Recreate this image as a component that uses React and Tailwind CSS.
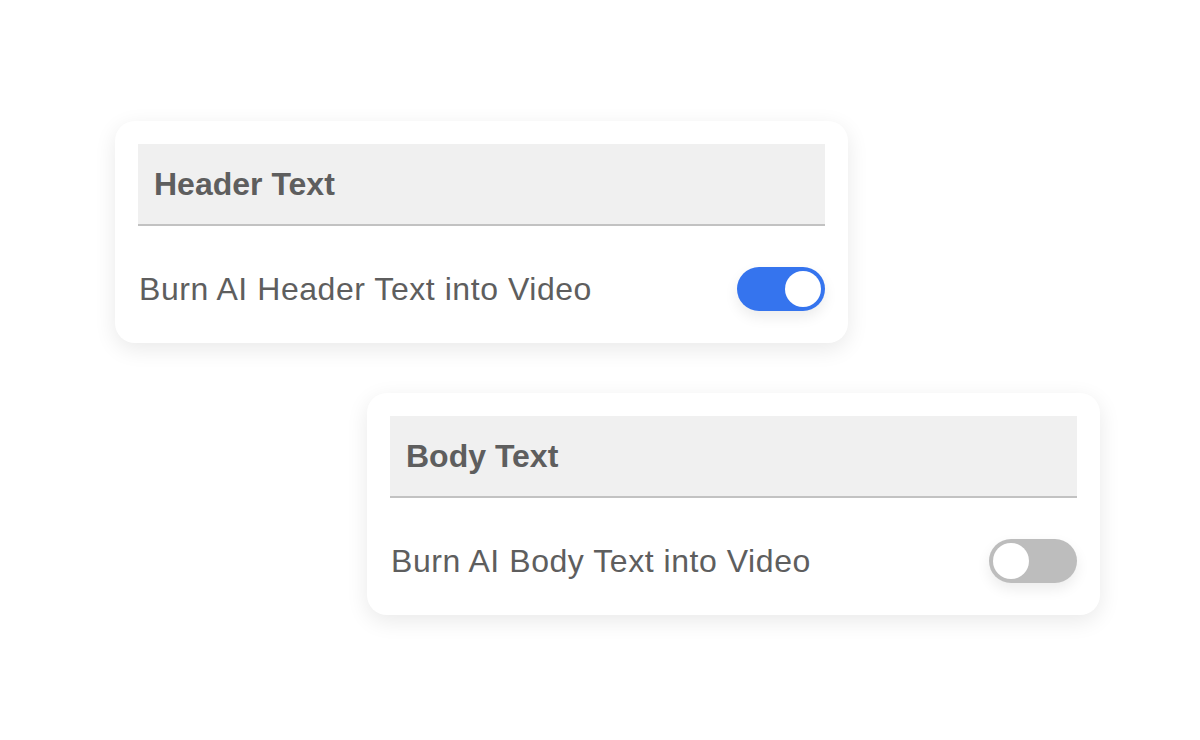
export default function App() {
  const Card = ({ title, label, on, className }) => (
    <div
      className={`w-[733px] h-[222px] rounded-[20px] bg-white shadow-[0_6px_22px_rgba(0,0,0,0.09)] px-[23px] pt-[23px] ${className}`}
    >
      <div className="h-[82px] bg-[#f0f0f0] border-b-2 border-[#c2c2c2] flex items-center pl-[16px]">
        <span className="text-[32px] font-bold text-[#5e5e5e] leading-none">{title}</span>
      </div>
      <div className="flex items-center justify-between pt-[41px] pl-[1px]">
        <span className="text-[32px] tracking-[0.55px] text-[#5e5e5e] leading-none">{label}</span>
        {on ? (
          <div className="w-[88px] h-[44px] rounded-full bg-[#3574ee] flex items-center justify-end pr-[4px] shadow-[0_6px_14px_rgba(0,0,0,0.08)]">
            <div className="w-[36px] h-[36px] rounded-full bg-white" />
          </div>
        ) : (
          <div className="w-[88px] h-[44px] rounded-full bg-[#bdbdbd] flex items-center justify-start pl-[4px] shadow-[0_6px_14px_rgba(0,0,0,0.08)]">
            <div className="w-[36px] h-[36px] rounded-full bg-white" />
          </div>
        )}
      </div>
    </div>
  );

  return (
    <div
      className="w-[1200px] h-[740px] bg-white pt-[121px] overflow-hidden"
      style={{ fontFamily: '"Liberation Sans", Arial, sans-serif' }}
    >
      <Card title="Header Text" label="Burn AI Header Text into Video" on className="ml-[115px]" />
      <Card title="Body Text" label="Burn AI Body Text into Video" on={false} className="ml-[367px] mt-[50px]" />
    </div>
  );
}
